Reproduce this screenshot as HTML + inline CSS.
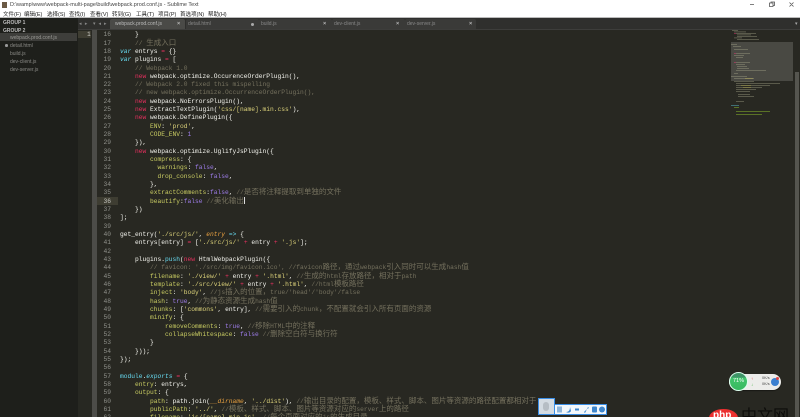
<!DOCTYPE html>
<html><head><meta charset="utf-8"><style>
*{margin:0;padding:0;box-sizing:border-box}
html,body{width:800px;height:417px;overflow:hidden;background:#282822}
#r{position:relative;width:800px;height:417px;overflow:hidden;filter:blur(.3px);font-family:"Liberation Sans","Noto Sans CJK SC",sans-serif}
.a{position:absolute;white-space:pre}
#code{position:absolute;left:120px;top:31.2px;font:6.25px/8.333px "Liberation Mono","Noto Sans CJK SC",monospace;color:#f4f4ee}
#code div{height:8.333px;white-space:pre}
#nums{position:absolute;left:98px;width:13px;top:31.2px;text-align:right;font:6.25px/8.333px "Liberation Mono",monospace;color:#8f908a}
#nums div{height:8.333px}
b{font-weight:normal;font-size:7.5px;line-height:8px}
.k{color:#e8305f}.s{color:#dcd27a}.g{color:#c9cc62}.p{color:#9d7ce8}.y{color:#66d9ef;font-style:italic}.c{color:#75715e}.n{color:#66d9ef}.o{color:#e8a040;font-style:italic}
.side{color:#8a8a86;font-size:5px;left:10px}
.tab{top:19px;height:10px;background:#3a3a38;border-radius:2px 2px 0 0}
.tt{top:20.5px;font-size:5px;color:#888}
.x{top:20.5px;font-size:5.5px;color:#bbb;font-weight:bold}
.grp{font-size:5px;font-weight:bold;color:#bdbdbd;left:3px}
.m{top:10px;font-size:5.5px;color:#222}
</style></head><body><div id="r">
<div class="a" style="left:0;top:0;width:800px;height:18px;background:#fff"></div>
<div class="a" style="left:2px;top:2px;width:5px;height:6px;background:#6b5a45"></div>
<div class="a" style="left:10px;top:2px;font-size:5.5px;color:#444">D:\wamp\www\webpack-multi-page\build\webpack.prod.conf.js - Sublime Text</div>
<div class="a m" style="left:3px">文件(F)</div>
<div class="a m" style="left:24px">编辑(E)</div>
<div class="a m" style="left:47px">选择(S)</div>
<div class="a m" style="left:69px">查找(I)</div>
<div class="a m" style="left:90px">查看(V)</div>
<div class="a m" style="left:112px">转到(G)</div>
<div class="a m" style="left:136px">工具(T)</div>
<div class="a m" style="left:158px">项目(P)</div>
<div class="a m" style="left:180px">首选项(N)</div>
<div class="a m" style="left:208px">帮助(H)</div>
<svg class="a" style="left:745px;top:0" width="55" height="9" fill="none" stroke="#555" stroke-width=".8"><path d="M5 4.500h4M24.500 3h3.500v3.500h-3.500zM26 3v-1h3.500v3.500h-1.500M44.500 2.500l4 4M48.500 2.500l-4 4"/></svg>
<div class="a" style="left:0;top:17px;width:800px;height:1.500px;background:#bbb"></div>

<div class="a" style="left:0;top:18px;width:78px;height:399px;background:#1e1f1b"></div>
<div class="a grp" style="top:20px">GROUP 1</div>
<div class="a grp" style="top:28px">GROUP 2</div>
<div class="a" style="left:0;top:33px;width:77px;height:8px;background:#3e3e3b"></div>
<div class="a side" style="top:34.500px;color:#9a9a96">webpack.prod.conf.js</div>
<div class="a" style="left:5px;top:44px;width:2.500px;height:2.500px;border-radius:50%;background:#999"></div>
<div class="a side" style="top:42.500px">detail.html</div>
<div class="a side" style="top:50.500px">build.js</div>
<div class="a side" style="top:58.500px">dev-client.js</div>
<div class="a side" style="top:66.500px">dev-server.js</div>

<div class="a" style="left:78px;top:18px;width:722px;height:11px;background:#2f2f2d"></div>
<div class="a" style="left:78px;top:28.500px;width:722px;height:1.500px;background:#3d3d3b"></div>
<div class="a" style="left:79px;top:20.500px;font-size:5px;color:#888;letter-spacing:1px">◂ ▸</div>
<div class="a" style="left:93px;top:20.500px;font-size:5px;color:#888;letter-spacing:.8px">▾ ◂ ▸</div>
<div class="a tab" style="left:110px;width:75px;background:#4a4a47"></div>
<div class="a tab" style="left:186px;width:73px"></div>
<div class="a tab" style="left:259px;width:73px"></div>
<div class="a tab" style="left:332px;width:73px"></div>
<div class="a tab" style="left:405px;width:71px"></div>
<div class="a tt" style="left:115px;color:#bbb">webpack.prod.conf.js</div>
<div class="a x" style="left:177px">×</div>
<div class="a tt" style="left:188px">detail.html</div>
<div class="a" style="left:251px;top:22.500px;width:3px;height:3px;border-radius:50%;background:#aaa"></div>
<div class="a tt" style="left:261px">build.js</div>
<div class="a x" style="left:323px">×</div>
<div class="a tt" style="left:334px">dev-client.js</div>
<div class="a x" style="left:396px">×</div>
<div class="a tt" style="left:407px">dev-server.js</div>
<div class="a x" style="left:469px">×</div>
<div class="a" style="left:795px;top:21px;font-size:5px;color:#aaa">▾</div>

<div class="a" style="left:78px;top:30px;width:13px;height:387px;background:#272822"></div>
<div class="a" style="left:78px;top:31px;width:13px;height:7px;background:#3e3d32"></div>
<div class="a" style="left:87px;top:31px;font:6.250px/8.300px 'Liberation Mono',monospace;color:#c8c8c2">1</div>
<div class="a" style="left:92px;top:30px;width:5px;height:387px;background:#4c4c48"></div>
<div class="a" style="left:97px;top:196.500px;width:21px;height:8.500px;background:#3e3d32"></div>

<div id="nums"><div>16</div><div>17</div><div>18</div><div>19</div><div>20</div><div>21</div><div>22</div><div>23</div><div>24</div><div>25</div><div>26</div><div>27</div><div>28</div><div>29</div><div>30</div><div>31</div><div>32</div><div>33</div><div>34</div><div>35</div><div style="color:#c8c8c2">36</div><div>37</div><div>38</div><div>39</div><div>40</div><div>41</div><div>42</div><div>43</div><div>44</div><div>45</div><div>46</div><div>47</div><div>48</div><div>49</div><div>50</div><div>51</div><div>52</div><div>53</div><div>54</div><div>55</div><div>56</div><div>57</div><div>58</div><div>59</div><div>60</div><div>61</div><div>62</div></div>

<div id="code">
<div>    }</div>
<div class="c">    // <b>生成入口</b></div>
<div><i class="y">var</i> entrys <span class="k">=</span> {}</div>
<div><i class="y">var</i> plugins <span class="k">=</span> [</div>
<div class="c">    // Webpack 1.0</div>
<div>    <span class="k">new</span> webpack.optimize.OccurenceOrderPlugin(),</div>
<div class="c">    // Webpack 2.0 fixed this mispelling</div>
<div class="c">    // new webpack.optimize.OccurrenceOrderPlugin(),</div>
<div>    <span class="k">new</span> webpack.NoErrorsPlugin(),</div>
<div>    <span class="k">new</span> ExtractTextPlugin(<span class="s">'css/[name].min.css'</span>),</div>
<div>    <span class="k">new</span> webpack.DefinePlugin({</div>
<div>        <span class="g">ENV</span>: <span class="s">'prod'</span>,</div>
<div>        <span class="g">CODE_ENV</span>: <span class="p">1</span></div>
<div>    }),</div>
<div>    <span class="k">new</span> webpack.optimize.UglifyJsPlugin({</div>
<div>        <span class="g">compress</span>: {</div>
<div>          <span class="g">warnings</span>: <span class="p">false</span>,</div>
<div>          <span class="g">drop_console</span>: <span class="p">false</span>,</div>
<div>        },</div>
<div>        <span class="g">extractComments</span>:<span class="p">false</span>, <span class="c">//<b>是否将注释提取到单独的文件</b></span></div>
<div>        <span class="g">beautify</span>:<span class="p">false</span> <span class="c">//<b>美化输出</b></span></div>
<div>    })</div>
<div>];</div>
<div> </div>
<div>get_entry(<span class="s">'./src/js/'</span>, <span class="o">entry</span> <span class="n">=&gt;</span> {</div>
<div>    entrys[entry] <span class="k">=</span> [<span class="s">'./src/js/'</span> <span class="k">+</span> entry <span class="k">+</span> <span class="s">'.js'</span>];</div>
<div> </div>
<div>    plugins.<span class="n">push</span>(<span class="k">new</span> HtmlWebpackPlugin({</div>
<div class="c">        // favicon: './src/img/favicon.ico', //favicon<b>路径，通过</b>webpack<b>引入同时可以生成</b>hash<b>值</b></div>
<div>        <span class="g">filename</span>: <span class="s">'./view/'</span> <span class="k">+</span> entry <span class="k">+</span> <span class="s">'.html'</span>, <span class="c">//<b>生成的</b>html<b>存放路径，相对于</b>path</span></div>
<div>        <span class="g">template</span>: <span class="s">'./src/view/'</span> <span class="k">+</span> entry <span class="k">+</span> <span class="s">'.html'</span>, <span class="c">//html<b>模板路径</b></span></div>
<div>        <span class="g">inject</span>: <span class="s">'body'</span>, <span class="c">//js<b>插入的位置，</b>true/'head'/'body'/false</span></div>
<div>        <span class="g">hash</span>: <span class="p">true</span>, <span class="c">//<b>为静态资源生成</b>hash<b>值</b></span></div>
<div>        <span class="g">chunks</span>: [<span class="s">'commons'</span>, entry], <span class="c">//<b>需要引入的</b>chunk<b>，不配置就会引入所有页面的资源</b></span></div>
<div>        <span class="g">minify</span>: {</div>
<div>            <span class="g">removeComments</span>: <span class="p">true</span>, <span class="c">//<b>移除</b>HTML<b>中的注释</b></span></div>
<div>            <span class="g">collapseWhitespace</span>: <span class="p">false</span> <span class="c">//<b>删除空白符与换行符</b></span></div>
<div>        }</div>
<div>    }));</div>
<div>});</div>
<div> </div>
<div><span class="n">module</span>.<span class="y">exports</span> <span class="k">=</span> {</div>
<div>    <span class="g">entry</span>: entrys,</div>
<div>    <span class="g">output</span>: {</div>
<div>        <span class="g">path</span>: path.join(<span class="o">__dirname</span>, <span class="s">'../dist'</span>), <span class="c">//<b>输出目录的配置，模板、样式、脚本、图片等资源的路径配置都相对于</b></span></div>
<div>        <span class="g">publicPath</span>: <span class="s">'../'</span>, <span class="c">//<b>模板、样式、脚本、图片等资源对应的</b>server<b>上的路径</b></span></div>
<div>        <span class="g">filename</span>: <span class="s">'js/[name].min.js'</span>, <span class="c">//<b>每个页面对应的</b>js<b>的生成目录</b></span></div>
</div>
<div class="a" style="left:243.500px;top:197px;width:.7px;height:7px;background:#ddd"></div>

<div class="a" style="left:731px;top:42px;width:62px;height:39px;background:#494943"></div>
<svg class="a" style="left:731px;top:29px" width="60" height="92" opacity=".5">
<g fill="#a6a68a"><rect x="1" y="1" width="6" height=".8"/><rect x="3" y="2.500" width="12" height=".8"/><rect x="3" y="4" width="22" height=".8"/><rect x="6" y="5.500" width="14" height=".8"/><rect x="6" y="7" width="20" height=".8"/><rect x="3" y="8.500" width="8" height=".8"/><rect x="6" y="10" width="22" height=".8"/><rect x="0" y="15" width="6" height=".8"/><rect x="2" y="17" width="8" height=".8"/><rect x="3" y="20" width="14" height=".8"/><rect x="3" y="24" width="16" height=".8"/><rect x="3" y="26" width="10" height=".8"/><rect x="5" y="28" width="7" height=".8"/><rect x="3" y="33" width="16" height=".8"/><rect x="5" y="35" width="9" height=".8"/><rect x="6" y="37" width="10" height=".8"/><rect x="6" y="39" width="12" height=".8"/><rect x="5" y="41" width="30" height=".8"/><rect x="3" y="44" width="4" height=".8"/><rect x="0" y="47" width="16" height=".8"/><rect x="3" y="49" width="20" height=".8"/><rect x="3" y="52" width="20" height=".8"/><rect x="5" y="54" width="44" height=".8"/><rect x="5" y="56" width="34" height=".8"/><rect x="5" y="58" width="26" height=".8"/><rect x="5" y="60" width="20" height=".8"/><rect x="5" y="62" width="14" height=".8"/><rect x="7" y="65" width="12" height=".8"/><rect x="7" y="67" width="16" height=".8"/><rect x="5" y="72" width="8" height=".8"/></g>
<g fill="#f92672"><rect x="3" y="4" width="2" height=".8"/><rect x="3" y="24" width="2" height=".8"/><rect x="3" y="33" width="2" height=".8"/></g>
<g fill="#e6db74"><rect x="14" y="49" width="8" height=".8"/><rect x="10" y="56" width="10" height=".8"/><rect x="12" y="58" width="8" height=".8"/></g>
<g fill="#66d9ef"><rect x="0" y="76" width="8" height=".8"/></g>
<g fill="#a6e22e"><rect x="3" y="78" width="5" height=".8"/><rect x="5" y="82" width="34" height=".8"/><rect x="5" y="85" width="26" height=".8"/></g>
</svg>
<div class="a" style="left:795px;top:72px;width:3.500px;height:345px;background:#55554f"></div>

<div class="a" style="left:537.500px;top:398px;width:17px;height:17px;background:#d4dbe2;border:1px solid #3a8ee6"></div>
<div class="a" style="left:543px;top:402px;width:6px;height:9px;border-radius:3px;background:#b6bdc4"></div>
<div class="a" style="left:554px;top:404px;width:53px;height:10.500px;background:#f2f7fc;border:1px solid #3a8ee6"></div>
<svg class="a" style="left:556px;top:405px" width="50" height="9"><g fill="#3f86cc"><rect x="1" y="1.500" width="5" height="6" fill="#8fb6dc"/><path d="M10 7c3 0 4-2 4-5l1 4c-1 2-3 2-5 1z"/><rect x="19" y="3.500" width="4" height="2"/><path d="M28 7l3-3 1-2 1 1-2 1-2 4z"/><rect x="36" y="1.500" width="5" height="6" rx="1"/><circle cx="46" cy="4.500" r="3"/></g></svg>

<div class="a" style="left:729px;top:373.500px;width:52px;height:16px;border-radius:8px;background:#ececea;box-shadow:0 1px 1px #0006"></div>
<div class="a" style="left:729px;top:372px;width:19px;height:19px;border-radius:50%;background:linear-gradient(#3f9468 0,#3f9468 25%,#41c56c 26%,#38b860 100%);border:1px solid #dfe;color:#fff;font-size:5.500px;line-height:17px;text-align:center">71%</div>
<div class="a" style="left:751px;top:376px;font-size:4px;color:#d33">↑</div>
<div class="a" style="left:751px;top:382px;font-size:4px;color:#2a2">↓</div>
<div class="a" style="left:762px;top:376px;font-size:3.800px;color:#444">0K/s</div>
<div class="a" style="left:762px;top:382px;font-size:3.800px;color:#444">0K/s</div>
<div class="a" style="left:771px;top:378px;width:8px;height:8px;border-radius:50%;background:#3a7fd0"></div>
<div class="a" style="left:776px;top:377px;width:3px;height:3px;border-radius:50%;background:#d44"></div>

<div class="a" style="left:709px;top:408.500px;width:29px;height:18px;border-radius:50%;background:#ec3030"></div>
<div class="a" style="left:713px;top:410px;font:bold 10px/12px 'Liberation Sans',sans-serif;color:#fff">php</div>
<div class="a" style="left:741px;top:408px;font-size:16px;line-height:18px;color:#0c0c0a">中文网</div>
</div></body></html>
